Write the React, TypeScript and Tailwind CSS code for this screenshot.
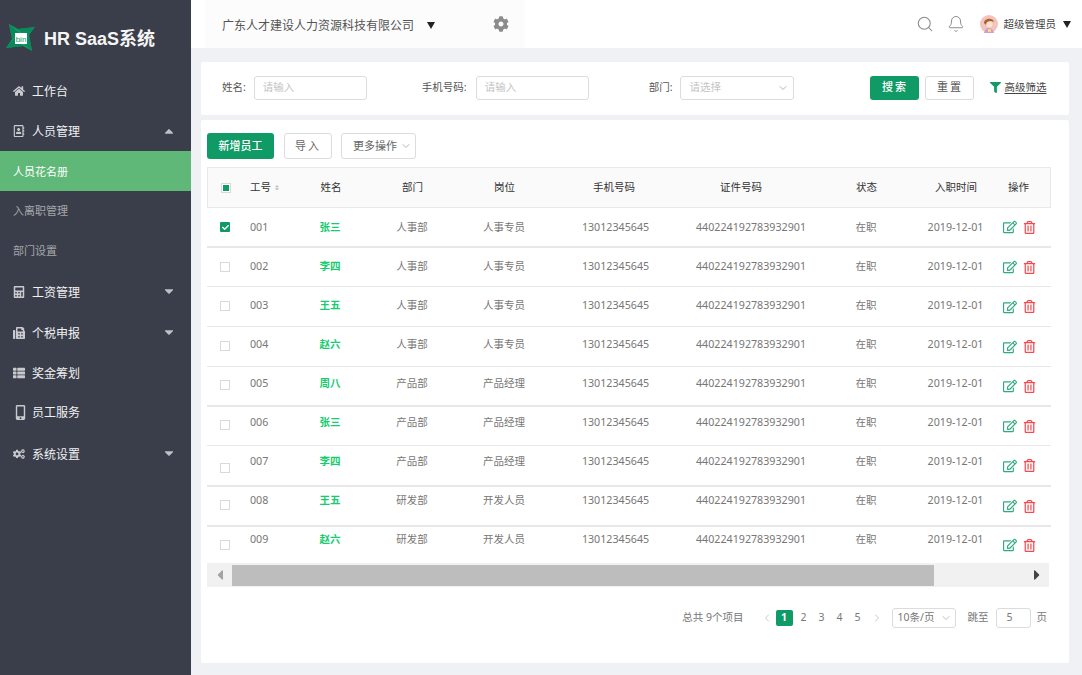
import { Bell, ChevronDown, ChevronLeft, ChevronRight, Search } from "lucide-react";
import {
  FaCalculator,
  FaCaretDown,
  FaCaretLeft,
  FaCaretRight,
  FaCaretUp,
  FaCheck,
  FaCog,
  FaCogs,
  FaFax,
  FaFilter,
  FaHome,
  FaMobileAlt,
  FaRegAddressBook,
  FaRegEdit,
  FaRegTrashAlt,
  FaThList,
} from "react-icons/fa";
import type { ReactNode } from "react";

const fontStack = "font-['Noto_Sans','Noto_Sans_CJK_SC',sans-serif]";
const rowGrid = "grid grid-cols-[34px_60px_58px_106px_78px_144px_126px_106px_72px_54px_6px] items-center";

// the text and the checkboxes drift a little inside their rows, hence lift and box
const employees = [
  { id: "001", name: "张三", dept: "人事部", job: "人事专员", checked: true, h: "h-[40px]", border: "border-b-2", lift: "", box: "" },
  { id: "002", name: "李四", dept: "人事部", job: "人事专员", h: "h-[39px]", border: "border-b", lift: "pb-[2px]", box: "" },
  { id: "003", name: "王五", dept: "人事部", job: "人事专员", h: "h-[40px]", border: "border-b", lift: "pb-[3px]", box: "pb-[2px]" },
  { id: "004", name: "赵六", dept: "人事部", job: "人事专员", h: "h-[40px]", border: "border-b", lift: "pb-[5px]", box: "pb-[2px]" },
  { id: "005", name: "周八", dept: "产品部", job: "产品经理", h: "h-[40px]", border: "border-b-2", lift: "pb-[6px]", box: "pb-[2px]" },
  { id: "006", name: "张三", dept: "产品部", job: "产品经理", h: "h-[39px]", border: "border-b", lift: "pb-[8px]", box: "pb-[2px]" },
  { id: "007", name: "李四", dept: "产品部", job: "产品经理", h: "h-[41px]", border: "border-b-2", lift: "pb-[9px]", box: "pt-[4px]" },
  { id: "008", name: "王五", dept: "研发部", job: "开发人员", h: "h-[40px]", border: "border-b-2", lift: "pb-[12px]", box: "pb-[2px]" },
  { id: "009", name: "赵六", dept: "研发部", job: "开发人员", h: "h-[36px]", border: "", lift: "pb-[12px]", box: "" },
];

function Logo() {
  return (
    <svg width="29" height="28" viewBox="0 0 29 28" className="shrink-0">
      <path d="M3 0 L12 5 L29 3 L23 11 L26 27 L17 22 L0 24 L6 15 Z" fill="#0f9a66" />
      <path d="M3 0 L13 9 L6 15 Z M29 3 L20 13 L12 5 Z M26 27 L16 18 L23 11 Z M0 24 L9 14 L17 22 Z" fill="#0a8a5b" />
      <rect x="9" y="9" width="12" height="11" fill="#fff" />
      <text x="15" y="18" textAnchor="middle" fontSize="8" fill="#0f9a66" fontFamily="Liberation Sans">
        bin
      </text>
    </svg>
  );
}

function Avatar() {
  return (
    <svg width="18" height="18" viewBox="0 0 18 18" className="shrink-0">
      <circle cx="9" cy="9" r="9" fill="#f3c4bb" />
      <path d="M4 8 C4 3 13 2 14 7 L11 6 L7 7 L6 10 Z" fill="#a8622f" />
      <circle cx="9.5" cy="9.5" r="3" fill="#fbe3d4" />
      <path d="M4 18 Q5 13 9 13 Q13 13 14 18 Z" fill="#d39ad8" />
      <rect x="8" y="14" width="3" height="3" fill="#f4dd7a" />
    </svg>
  );
}

function BlackCaret({ className = "" }: { className?: string }) {
  return (
    <svg width="8" height="7" viewBox="0 0 8 7" className={`shrink-0 ${className}`}>
      <path d="M0 0 H8 L4 7 Z" fill="#222" />
    </svg>
  );
}

function NavItem({
  icon,
  label,
  arrow,
  className = "",
}: {
  icon: ReactNode;
  label: string;
  arrow?: "up" | "down";
  className?: string;
}) {
  return (
    <div className={`flex h-[40px] items-center pl-[13px] pr-[15px] ${className}`}>
      <span className="flex w-[19px] justify-start text-[12px] text-[#c9cacd]">{icon}</span>
      <span className="pt-[2px] text-[12px] text-[#f1f1f2]">{label}</span>
      {arrow === "up" && <FaCaretUp className="ml-auto text-[14px] text-[#bfc0c4]" />}
      {arrow === "down" && <FaCaretDown className="ml-auto -mt-[2px] text-[14px] text-[#bfc0c4]" />}
    </div>
  );
}

function Sidebar() {
  return (
    <aside className="flex w-[191px] shrink-0 flex-col bg-[#3a3e4a]">
      <div className="flex h-[71px] items-center gap-[9px] pl-[6px] pt-[4px]">
        <Logo />
        <span className="pt-[2px] font-['Liberation_Sans','Noto_Sans_CJK_SC',sans-serif] text-[18px] leading-none font-bold whitespace-nowrap text-[#f5f5f5]">
          HR SaaS系统
        </span>
      </div>
      <NavItem icon={<FaHome />} label="工作台" />
      <NavItem icon={<FaRegAddressBook />} label="人员管理" arrow="up" />
      <div className="flex h-[40px] items-center bg-[#5fb878] pt-[2px] pl-[13px] text-[11px] text-white">人员花名册</div>
      <div className="flex h-[39px] items-center pt-[2px] pl-[13px] text-[11px] text-[#a5a6ab]">入离职管理</div>
      <div className="flex h-[40px] items-center pt-[2px] pl-[13px] text-[11px] text-[#a5a6ab]">部门设置</div>
      <NavItem icon={<FaCalculator />} label="工资管理" arrow="down" className="mt-[2px]" />
      <NavItem icon={<FaFax />} label="个税申报" arrow="down" className="mt-[1px]" />
      <NavItem icon={<FaThList />} label="奖金筹划" />
      <NavItem icon={<FaMobileAlt className="text-[15px]" />} label="员工服务" className="-mt-[1px]" />
      <NavItem icon={<FaCogs />} label="系统设置" arrow="down" className="mt-[2px]" />
    </aside>
  );
}

function Topbar() {
  return (
    <header className="flex h-[48px] shrink-0 items-center bg-white pr-[11px]">
      <div className="ml-[14px] flex h-full w-[320px] items-center bg-[#fcfcfd] pl-[17px]">
        <span className="pt-[3px] text-[12px] text-[#555]">广东人才建设人力资源科技有限公司</span>
        <BlackCaret className="mt-[3px] ml-[13px]" />
        <FaCog className="ml-[58px] text-[16px] text-[#8c8c8c]" />
      </div>
      <Search className="ml-auto size-[18px] text-[#8a8a8a]" strokeWidth={1.4} />
      <Bell className="ml-[13px] size-[18px] text-[#8a8a8a]" strokeWidth={1.3} />
      <div className="ml-[15px] flex items-center">
        <Avatar />
        <span className="ml-[6px] pt-[2px] text-[10.5px] text-[#444]">超级管理员</span>
        <BlackCaret className="ml-[7px]" />
      </div>
    </header>
  );
}

function FilterField({ label, children, className = "" }: { label: string; children: ReactNode; className?: string }) {
  return (
    <div className={`flex items-center ${className}`}>
      <span className="text-[10.5px] text-[#555]">{label}</span>
      {children}
    </div>
  );
}

function TextBox({ className = "" }: { className?: string }) {
  return (
    <div className={`flex h-[24px] w-[113px] items-center rounded-[3px] border border-[#dcdcdc] pl-[8px] text-[10.5px] text-[#c4c4c4] ${className}`}>
      请输入
    </div>
  );
}

function FilterCard() {
  return (
    <section className="flex h-[53px] items-center rounded-[2px] bg-white pb-[2px] pl-[21px]">
      <FilterField label="姓名:">
        <TextBox className="ml-[8px]" />
      </FilterField>
      <FilterField label="手机号码:" className="ml-[55px]">
        <TextBox className="ml-[9px]" />
      </FilterField>
      <FilterField label="部门:" className="ml-[60px]">
        <div className="ml-[8px] flex h-[24px] w-[114px] items-center rounded-[3px] border border-[#dcdcdc] pr-[4px] pl-[8px] text-[10.5px] text-[#c4c4c4]">
          请选择
          <ChevronDown className="ml-auto size-[12px] text-[#b5b5b5]" />
        </div>
      </FilterField>
      <button className="ml-[76px] flex h-[24px] w-[49px] items-center justify-center rounded-[3px] bg-[#0f9a66] text-[11px] font-medium tracking-[2px] text-white">
        搜索
      </button>
      <button className="ml-[6px] flex h-[24px] w-[49px] items-center justify-center rounded-[3px] border border-[#dcdcdc] text-[11px] tracking-[2px] text-[#555]">
        重置
      </button>
      <FaFilter className="ml-[16px] text-[11px] text-[#0f9a66]" />
      <span className="ml-[3px] text-[10.5px] text-[#444] underline underline-offset-2">高级筛选</span>
    </section>
  );
}

function Checkbox({ state }: { state?: "checked" | "mixed" }) {
  if (state === "checked") {
    return (
      <span className="flex size-[10px] items-center justify-center rounded-[1px] bg-[#0f9a66]">
        <FaCheck className="text-[7px] text-white" />
      </span>
    );
  }
  return (
    <span className="flex size-[10px] items-center justify-center border border-[#d9d9d9] bg-white">
      {state === "mixed" && <span className="size-[6px] bg-[#0f9a66]" />}
    </span>
  );
}

function Table() {
  return (
    <div className="ml-[6px] w-[844px]">
      <div className={`${rowGrid} h-[41px] border border-[#e8e8e8] bg-[#fafafa] text-[10.5px] text-[#333]`}>
        <div className="flex justify-center pl-[2px]">
          <Checkbox state="mixed" />
        </div>
        <div className="flex items-center gap-[3px] pl-[8px]">
          工号
          <span className="flex flex-col text-[#bbb]">
            <FaCaretUp className="-mb-[3px] text-[6px]" />
            <FaCaretDown className="text-[6px]" />
          </span>
        </div>
        <div className="text-center">姓名</div>
        <div className="pr-[1px] text-center">部门</div>
        <div className="pr-[1px] text-center">岗位</div>
        <div className="pr-[4px] text-center">手机号码</div>
        <div className="pr-[20px] text-center">证件号码</div>
        <div className="pr-[1px] text-center">状态</div>
        <div className="text-center">入职时间</div>
        <div className="pr-[1px] text-center">操作</div>
      </div>
      {employees.map((e) => (
        <div key={e.id} className={`${rowGrid} ${e.h} ${e.border} border-[#e8e8e8] text-[10.5px] text-[#777]`}>
          <div className={`flex justify-center pl-[2px] ${e.box}`}>
            <Checkbox state={e.checked ? "checked" : undefined} />
          </div>
          <div className={`pl-[9px] text-[10.7px] ${e.lift}`}>{e.id}</div>
          <div className={`mt-[2px] text-center font-bold text-[#16cc6f] ${e.lift}`}>{e.name}</div>
          <div className={`mt-[2px] text-center ${e.lift}`}>{e.dept}</div>
          <div className={`mt-[2px] text-center ${e.lift}`}>{e.job}</div>
          <div className={`pl-[1px] text-center text-[10.7px] ${e.lift}`}>13012345645</div>
          <div className={`pl-[2px] text-center text-[10.7px] ${e.lift}`}>440224192783932901</div>
          <div className={`mt-[2px] text-center ${e.lift}`}>在职</div>
          <div className={`pl-[1px] text-center text-[10.7px] whitespace-nowrap ${e.lift}`}>2019-12-01</div>
          <div className="flex items-center justify-center gap-[6px] pl-[2px]">
            <FaRegEdit className="text-[14px] text-[#2fab7d]" />
            <FaRegTrashAlt className="text-[13px] text-[#f5474d]" />
          </div>
        </div>
      ))}
      <div className="flex h-[24px] w-[842px] items-center bg-[#f1f1f1]">
        <div className="flex w-[25px] justify-center">
          <FaCaretLeft className="text-[16px] text-[#a3a3a3]" />
        </div>
        <div className="h-[21px] w-[702px] bg-[#bdbdbd]" />
        <div className="ml-auto flex w-[25px] justify-center">
          <FaCaretRight className="text-[16px] text-[#444]" />
        </div>
      </div>
    </div>
  );
}

function Pagination() {
  return (
    <div className="mt-[21px] flex h-[20px] items-center justify-end pr-[22px] text-[10.5px] text-[#777]">
      <span>总共 9个项目</span>
      <ChevronLeft className="ml-[17px] size-[12px] text-[#c8c8c8]" />
      <span className="ml-[3px] flex h-[16px] w-[17px] items-center justify-center rounded-[2px] bg-[#0f9a66] font-bold text-white">1</span>
      <span className="ml-[5px] w-[12px] text-center">2</span>
      <span className="ml-[6px] w-[12px] text-center">3</span>
      <span className="ml-[6px] w-[12px] text-center">4</span>
      <span className="ml-[6px] w-[12px] text-center">5</span>
      <ChevronRight className="ml-[7px] size-[12px] text-[#c8c8c8]" />
      <div className="ml-[9px] flex h-[20px] w-[64px] items-center rounded-[3px] border border-[#dcdcdc] pr-[3px] pl-[5px]">
        10条/页
        <ChevronDown className="ml-auto size-[12px] text-[#c0c0c0]" />
      </div>
      <span className="ml-[12px]">跳至</span>
      <div className="ml-[7px] flex h-[20px] w-[35px] items-center rounded-[3px] border border-[#dcdcdc] pl-[10px]">5</div>
      <span className="ml-[6px]">页</span>
    </div>
  );
}

export default function App() {
  return (
    <div className={`flex h-[675px] w-[1082px] overflow-hidden bg-white ${fontStack}`}>
      <Sidebar />
      <main className="flex min-w-0 flex-1 flex-col bg-[#f0f1f5]">
        <Topbar />
        <div className="flex flex-col pt-[14px] pr-[13px] pl-[10px]">
          <FilterCard />
          <section className="mt-[5px] h-[543px] rounded-[2px] bg-white pt-[13px]">
            <div className="ml-[6px] flex h-[26px] items-center text-[11px]">
              <button className="flex h-[26px] w-[67px] items-center justify-center rounded-[3px] bg-[#0f9a66] font-medium text-white">新增员工</button>
              <button className="ml-[10px] flex h-[26px] w-[48px] items-center justify-center rounded-[3px] border border-[#dcdcdc] tracking-[2px] text-[#666]">导入</button>
              <button className="ml-[9px] flex h-[26px] w-[75px] items-center justify-between rounded-[3px] border border-[#dcdcdc] pr-[3px] pl-[11px] text-[#666]">
                更多操作
                <ChevronDown className="size-[12px] text-[#b5b5b5]" />
              </button>
            </div>
            <div className="mt-[8px]">
              <Table />
            </div>
            <Pagination />
          </section>
        </div>
      </main>
    </div>
  );
}
